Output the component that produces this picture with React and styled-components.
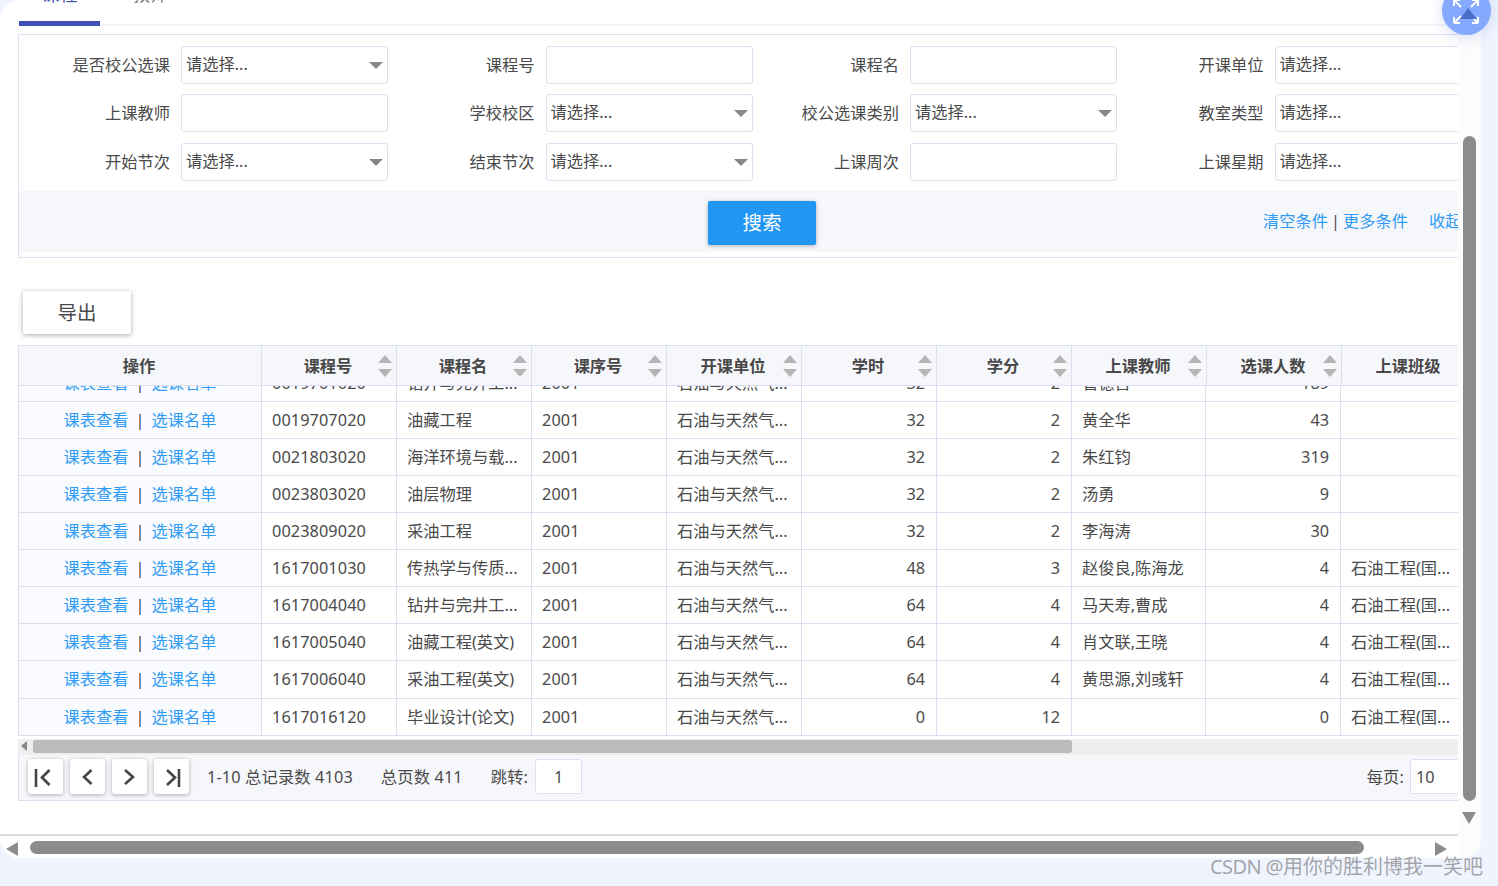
import React from "react";
import styled, { createGlobalStyle } from "styled-components";

const GlobalStyle = createGlobalStyle`
  html, body {
    margin: 0;
    padding: 0;
    height: 100%;
    overflow: hidden;
    background: #f0f4ff;
    font-family: "Noto Sans", "Noto Sans CJK SC", sans-serif;
    font-size: 16.25px;
    color: #4a4a4a;
  }
  * { box-sizing: border-box; }
`;

const Page = styled.div`
  position: relative;
  width: 1498px;
  height: 886px;
  overflow: hidden;
  background: #f0f4ff;
`;

const Window = styled.div`
  display: flex;
  width: 1481px;
  height: 858px;
  background: #fff;
  border-radius: 20px;
  overflow: hidden;
`;

const LeftColumn = styled.div`
  display: flex;
  flex-direction: column;
  width: 1458px;
`;

const Content = styled.div`
  height: 834px;
  overflow: hidden;
`;

const Scrolled = styled.div`
  margin-top: -30px;
`;

const Tabs = styled.div`
  display: flex;
  height: 56px;
  margin-left: 19px;
  border-bottom: 2px solid #f3f3fa;
`;

const Tab = styled.div`
  width: ${({ $w }) => $w}px;
  height: 56px;
  padding-top: 12px;
  font-size: 18px;
  line-height: 24px;
  text-align: center;
  color: ${({ $active }) => ($active ? "#4456b8" : "#777")};
  border-bottom: ${({ $active }) => ($active ? "5px solid #3f51b5" : "none")};
`;

const FormPanel = styled.div`
  width: 1500px;
  height: 224px;
  margin: 8px 0 0 18px;
  border: 1px solid #dcdff2;
  border-right: none;
  padding-top: 11px;
`;

const FormGrid = styled.div`
  display: grid;
  grid-template-columns: repeat(4, 364.5px);
  grid-auto-rows: 38px;
  row-gap: 10.4px;
  height: 135px;
  padding-left: 5px;
`;

const Field = styled.div`
  display: flex;
  align-items: center;
  gap: 11px;
`;

const Label = styled.label`
  flex: none;
  width: 146px;
  text-align: right;
  line-height: 22px;
  color: #4a4a4a;
`;

const Input = styled.input`
  flex: none;
  width: ${({ $w }) => $w || 207}px;
  height: 38px;
  padding: 0 6px;
  border: 1px solid #dcdff2;
  border-radius: 3px;
  outline: none;
  background: #fff;
  font: inherit;
  color: #4a4a4a;
`;

const Select = styled.div`
  position: relative;
  flex: none;
  width: 207px;
  height: 38px;
  padding: 0 4px;
  border: 1px solid #dcdff2;
  border-radius: 3px;
  background: #fff;
  line-height: 34px;
  color: #4a4a4a;

  ${({ $plain }) =>
    !$plain &&
    `&::after {
      content: "";
      position: absolute;
      right: 4px;
      top: 15px;
      border-left: 7.5px solid transparent;
      border-right: 7.5px solid transparent;
      border-top: 7px solid #888;
    }`}
`;

const FormFooter = styled.div`
  display: flex;
  align-items: flex-start;
  height: 61px;
  margin-top: 10px;
  padding: 10px 0 0 689px;
  background: #f6f7fb;
`;

const SearchButton = styled.button`
  width: 108px;
  height: 44px;
  padding: 0 0 4px;
  border: none;
  border-radius: 2px;
  background: #2196f3;
  color: #fff;
  font: inherit;
  font-size: 19.5px;
  box-shadow: 0 1px 4px rgba(0, 0, 0, 0.3);
`;

const FooterLinks = styled.div`
  display: flex;
  align-items: center;
  margin: 9px 0 0 447px;
  line-height: 22px;
  white-space: nowrap;
  color: #444;
`;

const TextLink = styled.a`
  color: #2f9bf4;
  margin-left: ${({ $gap }) => $gap || 0}px;
`;

const Divider = styled.span`
  margin: 0 ${({ $gap }) => $gap || 3}px;
  color: #444;
`;

const Toolbar = styled.div`
  padding: 33px 0 11px 23px;
`;

const ExportButton = styled.button`
  display: block;
  width: 108px;
  height: 43px;
  padding: 0 0 3px;
  border: none;
  border-radius: 2px;
  background: #fff;
  color: #4a4a4a;
  font: inherit;
  font-size: 19.5px;
  box-shadow: 0 1px 5px rgba(0, 0, 0, 0.35);
`;

const TableWrap = styled.div`
  width: 1458px;
  margin-left: 18px;
  border-top: 1px solid #dcdff2;
`;

const HeaderRow = styled.div`
  display: flex;
  height: 40px;
  background: #f6f7fb;
  border-bottom: 1px solid #dcdff2;
`;

const HeaderCell = styled.div`
  position: relative;
  flex: none;
  width: ${({ $w }) => $w}px;
  padding-right: 2px;
  line-height: 40px;
  text-align: center;
  font-weight: 700;
  color: #484848;
  border-left: 1px solid #dcdff2;
`;

const SortIcon = styled.svg`
  position: absolute;
  right: 4px;
  top: 9px;
  width: 14px;
  height: 22px;
`;

const TableBody = styled.div`
  height: 350px;
  overflow: hidden;
`;

const BodyInner = styled.div`
  margin-top: -21.3px;
`;

const Row = styled.div`
  display: flex;
  height: 37.1px;
  border-bottom: 1px solid #dcdff2;
`;

const Cell = styled.div`
  flex: none;
  width: ${({ $w }) => $w}px;
  padding: 0 11px 0 10px;
  line-height: 37px;
  white-space: nowrap;
  overflow: hidden;
  letter-spacing: ${({ $num }) => ($num ? "0.1px" : "0")};
  text-align: ${({ $right }) => ($right ? "right" : "left")};
  color: #4a4a4a;
  border-left: 1px solid #dcdff2;
`;

const ActionCell = styled(Cell)`
  padding: 0;
  text-align: center;
  background: #fafbff;
`;

const TableScroll = styled.div`
  position: relative;
  height: 16px;
  margin-top: 3px;
  padding: 1px 0 0 15px;
  background: #eee;
`;

const TableThumb = styled.div`
  width: 1039px;
  height: 13px;
  border-radius: 3px;
  background: #bbb;
`;

const ScrollArrow = styled.span`
  position: absolute;
  left: 3px;
  top: 2px;
  border-top: 5px solid transparent;
  border-bottom: 5px solid transparent;
  border-right: 6px solid #888;
`;

const Pager = styled.div`
  display: flex;
  align-items: center;
  height: 46px;
  padding: 0 0 2px 9px;
  background: #f6f7fb;
  border-bottom: 1px solid #dcdff2;
  border-left: 1px solid #dcdff2;
`;

const PageButtons = styled.div`
  display: flex;
  gap: 7px;
  margin-right: 18px;
`;

const PageButton = styled.button`
  width: 35px;
  height: 35px;
  padding: 0;
  border: none;
  border-radius: 3px;
  background: #fff;
  box-shadow: 0 1px 4px rgba(0, 0, 0, 0.3);

  svg {
    display: block;
    width: 35px;
    height: 35px;
  }
`;

const PagerText = styled.span`
  margin: 0 ${({ $gap }) => $gap || 0}px 2px 0;
  white-space: nowrap;
  letter-spacing: 0.15px;
  color: #4a4a4a;
`;

const PagerInput = styled(Input)`
  width: ${({ $w }) => $w}px;
  height: 35px;
  padding: 0 ${({ $center }) => ($center ? 6 : 5)}px;
  text-align: ${({ $center }) => ($center ? "center" : "left")};
`;

const PerPage = styled.div`
  display: flex;
  align-items: center;
  gap: 6px;
  margin-left: auto;
`;

const BottomScroll = styled.div`
  position: relative;
  height: 24px;
  padding: 5px 0 0 30px;
  border-top: 2px solid #ddd;
  background: #fff;
`;

const BottomThumb = styled.div`
  width: 1334px;
  height: 13px;
  border-radius: 7px;
  background: #8c8c8c;
`;

const BottomArrow = styled.span`
  position: absolute;
  top: 6px;
  ${({ $right }) => ($right ? "left: 1435px;" : "left: 6px;")}
  border-top: 7px solid transparent;
  border-bottom: 7px solid transparent;
  ${({ $right }) =>
    $right ? "border-left: 12px solid #8c8c8c;" : "border-right: 12px solid #8c8c8c;"}
`;

const SideScroll = styled.div`
  width: 23px;
  padding: 136px 0 0 5px;
  background: #fcfcfc;
`;

const SideThumb = styled.div`
  width: 13px;
  height: 665px;
  border-radius: 7px;
  background: #8c8c8c;
`;

const SideArrow = styled.span`
  display: block;
  width: 0;
  margin: 11px 0 0 -1px;
  border-left: 7.5px solid transparent;
  border-right: 7.5px solid transparent;
  border-top: 12px solid #8c8c8c;
`;

const Fab = styled.div`
  position: absolute;
  left: 1442px;
  top: -14px;
  width: 49px;
  height: 49px;
  border-radius: 50%;
  background: #85a9ff;
  box-shadow: 0 2px 14px rgba(90, 120, 200, 0.25);
`;

const Watermark = styled.div`
  position: absolute;
  right: 15px;
  top: 853px;
  font-size: 20px;
  line-height: 28px;
  white-space: nowrap;
  color: rgba(110, 110, 110, 0.6);
`;

const WatermarkLatin = styled.span`
  letter-spacing: -0.6px;
`;

const fields = [
  ["是否校公选课", "select"],
  ["课程号", "input"],
  ["课程名", "input"],
  ["开课单位", "plain"],
  ["上课教师", "input"],
  ["学校校区", "select"],
  ["校公选课类别", "select"],
  ["教室类型", "plain"],
  ["开始节次", "select"],
  ["结束节次", "select"],
  ["上课周次", "input"],
  ["上课星期", "plain"],
];

const columns = [
  { title: "操作", w: 243 },
  { title: "课程号", w: 135, sort: true },
  { title: "课程名", w: 135, sort: true },
  { title: "课序号", w: 135, sort: true },
  { title: "开课单位", w: 135, sort: true },
  { title: "学时", w: 135, sort: true },
  { title: "学分", w: 135, sort: true },
  { title: "上课教师", w: 135, sort: true },
  { title: "选课人数", w: 135, sort: true },
  { title: "上课班级", w: 135 },
];

const bodyWidths = [243, 135, 135, 135, 135, 135, 135, 134, 135, 135];

const dept = "石油与天然气...";
const cls = "石油工程(国...";

const rows = [
  ["0019701020", "钻井与完井工...", "32", "2", "管德吾", "189", ""],
  ["0019707020", "油藏工程", "32", "2", "黄全华", "43", ""],
  ["0021803020", "海洋环境与载...", "32", "2", "朱红钧", "319", ""],
  ["0023803020", "油层物理", "32", "2", "汤勇", "9", ""],
  ["0023809020", "采油工程", "32", "2", "李海涛", "30", ""],
  ["1617001030", "传热学与传质...", "48", "3", "赵俊良,陈海龙", "4", cls],
  ["1617004040", "钻井与完井工...", "64", "4", "马天寿,曹成", "4", cls],
  ["1617005040", "油藏工程(英文)", "64", "4", "肖文联,王晓", "4", cls],
  ["1617006040", "采油工程(英文)", "64", "4", "黄思源,刘彧轩", "4", cls],
  ["1617016120", "毕业设计(论文)", "0", "12", "", "0", cls],
];

const SortArrows = () => (
  <SortIcon viewBox="0 0 14 22">
    <path d="M7 0L14 8H0Z" fill="#b5b5b5" />
    <path d="M0 14H14L7 22Z" fill="#b5b5b5" />
  </SortIcon>
);

const pagerIcons = [
  { chevron: "M21.5 11L14 18.5L21.5 26", bar: "M8 10V28" },
  { chevron: "M21.5 11L14 18L21.5 25" },
  { chevron: "M13 11L21 18L13 25" },
  { chevron: "M13 11L21 18.5L13 26", bar: "M25 10V28" },
];

const PagerIcon = ({ chevron, bar }) => (
  <svg viewBox="0 0 35 35" fill="none" stroke="#444" strokeWidth="2.6">
    <path d={chevron} />
    {bar && <path d={bar} />}
  </svg>
);

const App = () => (
  <Page>
    <GlobalStyle />
    <Window>
      <LeftColumn>
        <Content>
          <Scrolled>
            <Tabs>
              <Tab $w={81} $active>
                课程
              </Tab>
              <Tab $w={100}>教师</Tab>
            </Tabs>

            <FormPanel>
              <FormGrid>
                {fields.map(([label, type]) => (
                  <Field key={label}>
                    <Label>{label}</Label>
                    {type === "input" ? (
                      <Input />
                    ) : (
                      <Select $plain={type === "plain"}>请选择...</Select>
                    )}
                  </Field>
                ))}
              </FormGrid>
              <FormFooter>
                <SearchButton>搜索</SearchButton>
                <FooterLinks>
                  <TextLink>清空条件</TextLink>
                  <Divider>|</Divider>
                  <TextLink>更多条件</TextLink>
                  <TextLink $gap={21}>收起</TextLink>
                </FooterLinks>
              </FormFooter>
            </FormPanel>

            <Toolbar>
              <ExportButton>导出</ExportButton>
            </Toolbar>

            <TableWrap>
              <HeaderRow>
                {columns.map((col) => (
                  <HeaderCell key={col.title} $w={col.w}>
                    {col.title}
                    {col.sort && <SortArrows />}
                  </HeaderCell>
                ))}
              </HeaderRow>
              <TableBody>
                <BodyInner>
                  {rows.map((row) => (
                    <Row key={row[0]}>
                      <ActionCell $w={bodyWidths[0]}>
                        <TextLink>课表查看</TextLink>
                        <Divider $gap={7}>|</Divider>
                        <TextLink>选课名单</TextLink>
                      </ActionCell>
                      <Cell $w={bodyWidths[1]} $num>
                        {row[0]}
                      </Cell>
                      <Cell $w={bodyWidths[2]}>{row[1]}</Cell>
                      <Cell $w={bodyWidths[3]} $num>
                        2001
                      </Cell>
                      <Cell $w={bodyWidths[4]}>{dept}</Cell>
                      <Cell $w={bodyWidths[5]} $right>
                        {row[2]}
                      </Cell>
                      <Cell $w={bodyWidths[6]} $right>
                        {row[3]}
                      </Cell>
                      <Cell $w={bodyWidths[7]}>{row[4]}</Cell>
                      <Cell $w={bodyWidths[8]} $right>
                        {row[5]}
                      </Cell>
                      <Cell $w={bodyWidths[9]}>{row[6]}</Cell>
                    </Row>
                  ))}
                </BodyInner>
              </TableBody>
              <TableScroll>
                <ScrollArrow />
                <TableThumb />
              </TableScroll>
              <Pager>
                <PageButtons>
                  {pagerIcons.map((icon) => (
                    <PageButton key={icon.chevron}>
                      <PagerIcon {...icon} />
                    </PageButton>
                  ))}
                </PageButtons>
                <PagerText $gap={28}>1-10 总记录数 4103</PagerText>
                <PagerText $gap={28}>总页数 411</PagerText>
                <PagerText $gap={7}>跳转:</PagerText>
                <PagerInput $w={47} $center defaultValue="1" />
                <PerPage>
                  <PagerText>每页:</PagerText>
                  <PagerInput $w={66} defaultValue="10" />
                </PerPage>
              </Pager>
            </TableWrap>
          </Scrolled>
        </Content>
        <BottomScroll>
          <BottomArrow />
          <BottomThumb />
          <BottomArrow $right />
        </BottomScroll>
      </LeftColumn>
      <SideScroll>
        <SideThumb />
        <SideArrow />
      </SideScroll>
    </Window>

    <Fab>
      <svg viewBox="0 0 49 49" width="49" height="49" fill="none" stroke="#fff" strokeWidth="2">
        <path d="M12 14L19 21M12 14V20M12 14H18" />
        <path d="M36 14L29 21M36 14V20M36 14H30" />
        <path d="M12 37L19 30M12 37V31M12 37H18" />
        <path d="M36 37L29 30M36 37V31M36 37H30" />
        <path d="M26 22L35 33H18Z" fill="#4a6fc4" stroke="none" />
      </svg>
    </Fab>
    <Watermark>
      <WatermarkLatin>CSDN @</WatermarkLatin>用你的胜利博我一笑吧
    </Watermark>
  </Page>
);

export default App;
